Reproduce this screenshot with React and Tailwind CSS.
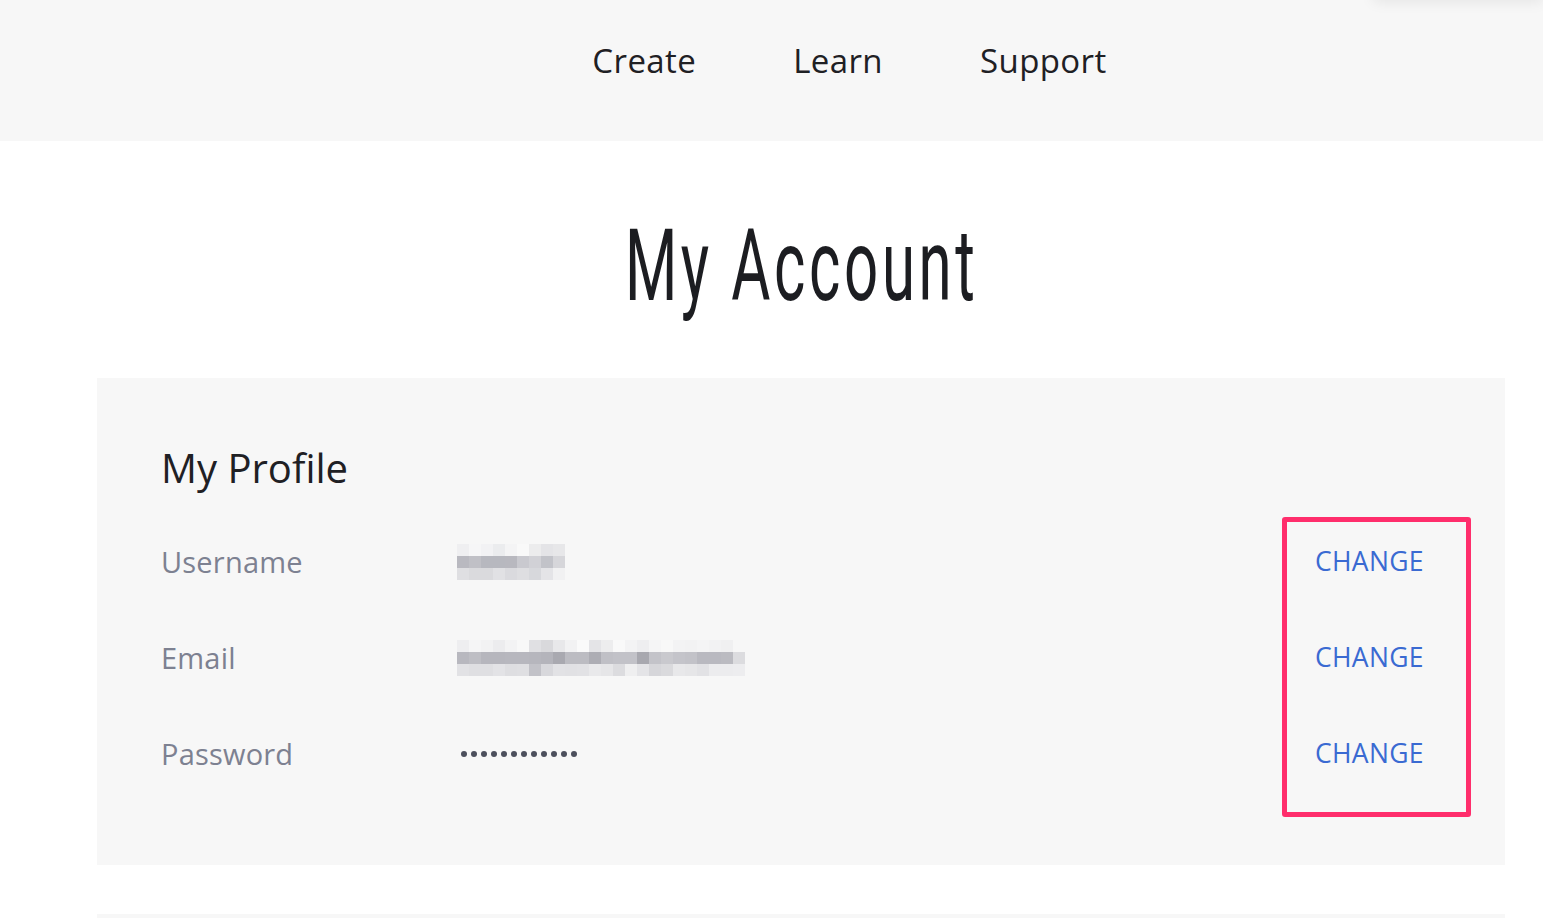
import clsx from 'clsx';

const sans = "font-['Open_Sans',sans-serif]";

const usernameBlur = [
  ['#efeff1', '#f6f6f7', '#f2f2f4', '#ebecee', '#f4f4f5', '#f9f9f9', '#ececed', '#e4e4e7', '#e7e7e9'],
  ['#b9b9c0', '#c0c0c6', '#b7b8bf', '#b7b8bf', '#b8b8bf', '#c9c9cf', '#d1d1d6', '#c2c3c9', '#d6d6da'],
  ['#dfdfe2', '#dadadd', '#dadadd', '#e1e1e4', '#dadade', '#dedee1', '#d7d8dc', '#e4e4e7', '#f1f1f2'],
];

const emailBlur = [
  ['#eeeef0', '#f5f5f6', '#f2f2f3', '#ececee', '#f3f3f4', '#f8f8f8', '#e0e0e3', '#d9d9dc', '#e8e8ea', '#f2f2f3', '#fafafa', '#e4e4e7', '#ededee', '#f9f9f9', '#f3f3f4', '#eeeef0', '#f5f5f6', '#f8f8f8', '#f3f3f4', '#f2f2f3', '#f4f4f5', '#f2f2f3', '#f0f0f1', '#f7f7f7'],
  ['#b8b8bf', '#bebec4', '#b6b6bd', '#b6b6bd', '#b7b7be', '#b7b7be', '#b6b6bd', '#b4b4bb', '#a9a9b0', '#bcbcc2', '#bcbcc2', '#adadb4', '#c0c0c6', '#c2c2c8', '#c2c2c8', '#a8a8af', '#c3c3c9', '#c9c9ce', '#c4c4ca', '#c2c2c8', '#b9b9c0', '#b9b9c0', '#bbbbc1', '#dcdcdf'],
  ['#e2e2e5', '#dfdfe2', '#dfdfe2', '#e3e3e6', '#dedee1', '#dfdfe2', '#c2c2c8', '#d8d8dc', '#e2e2e5', '#e1e1e4', '#e2e2e5', '#e9e9eb', '#e6e6e8', '#dcdcdf', '#efeff0', '#e4e4e7', '#d6d6da', '#dadadd', '#e8e8ea', '#e6e6e8', '#e2e2e5', '#ececee', '#ececee', '#ededef'],
];

function Blur({ rows }) {
  return (
    <div className="flex flex-col">
      {rows.map((row, i) => (
        <div key={i} className="flex">
          {row.map((c, j) => (
            <div key={j} className="w-3 h-3" style={{ backgroundColor: c }} />
          ))}
        </div>
      ))}
    </div>
  );
}

function Row({ label, children }) {
  return (
    <div className="flex items-center h-[96px]">
      <div className={clsx(sans, 'w-[296px] text-[29px] tracking-[0.2px] text-[#7d8191]')}>{label}</div>
      <div className="flex-1">{children}</div>
      <button className={clsx(sans, 'w-[124px] mr-[66px] text-left text-[26.5px] tracking-[0.3px] text-[#3a6ad2]')}>CHANGE</button>
    </div>
  );
}

export default function App() {
  return (
    <div className="min-h-screen bg-white">
      {/* Top nav */}
      <header className="relative h-[141px] bg-[#f7f7f7] flex items-center justify-center">
        <nav className={clsx(sans, 'flex gap-[97px] text-[33px] tracking-[0.4px] text-[#1f2024] pl-[156px] pb-[20px]')}>
          <a>Create</a>
          <a>Learn</a>
          <a>Support</a>
        </nav>
        <div className="absolute right-0 -top-[14px] w-[170px] h-[14px] shadow-[0_2px_14px_rgba(0,0,0,0.08)]" />
      </header>

      <div className="flex justify-center pt-[75px] pb-[62px] pl-[60px]">
        <h1 className="inline-block scale-x-[0.6] tracking-[6px] text-[100px] leading-none text-[#1c1d21] font-['Roboto',sans-serif] font-normal whitespace-nowrap">
          My Account
        </h1>
      </div>

      {/* Profile card */}
      <section className="relative mx-[97px] w-[1408px] bg-[#f7f7f7] pt-[70px] pb-[63px] pl-[64px]">
        <h2 className={clsx(sans, 'text-[40px] text-[#1f2024] leading-none mb-[26px]')}>My Profile</h2>
        <Row label="Username"><Blur rows={usernameBlur} /></Row>
        <Row label="Email"><Blur rows={emailBlur} /></Row>
        <Row label="Password">
          <div className="flex gap-[4px] pl-[4px]">
            {Array.from({ length: 12 }).map((_, i) => (
              <span key={i} className="w-[6px] h-[6px] rounded-full bg-[#4c4f5c]" />
            ))}
          </div>
        </Row>
        {/* highlight box */}
        <div className="absolute left-[1185px] top-[139px] w-[189px] h-[300px] border-[5px] border-[#ff2e6c] rounded-[3px] pointer-events-none" />
      </section>

      <div className="mx-[97px] w-[1408px] h-[40px] mt-[49px] bg-[#f7f7f7]" />
    </div>
  );
}
